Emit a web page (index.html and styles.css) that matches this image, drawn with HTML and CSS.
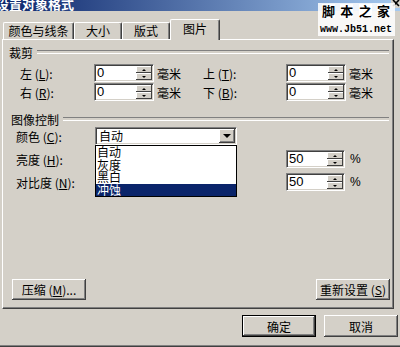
FILE: index.html
```html
<!DOCTYPE html>
<html lang="zh-CN">
<head>
    <meta charset="UTF-8">
    <meta name="viewport" content="width=device-width, initial-scale=1.0">
    <title>设置对象格式</title>
    <link rel="stylesheet" href="styles.css">
</head>
<body>
    <div class="titlebar">
        <span class="title">设置对象格式</span>
        <span class="close">
            <svg width="9" height="9" viewBox="0 0 9 9"><path d="M1 0 L7 6 M7 0 L1 6" stroke="#000" stroke-width="1.6"/></svg>
        </span>
    </div>

    <!-- site watermark over the title bar -->
    <div class="logo">
        <div class="logo-cn"><span>脚</span><span>本</span><span>之</span><span>家</span></div>
        <div class="logo-url">www.Jb51.net</div>
    </div>

    <div class="tabs">
        <div class="tab tab-wide">颜色与线条</div>
        <div class="tab">大小</div>
        <div class="tab">版式</div>
        <div class="tab active">图片</div>
    </div>

    <div class="panel">
        <div class="group-title first"><span>裁剪</span></div>
        <div class="crop-grid">
            <span class="label">左 (<u>L</u>):</span>
            <div class="spin"><span class="spin-value">0</span><div class="spin-btns"><span class="up"></span><span class="down"></span></div></div>
            <span class="unit">毫米</span>
            <span class="label">上 (<u>T</u>):</span>
            <div class="spin"><span class="spin-value">0</span><div class="spin-btns"><span class="up"></span><span class="down"></span></div></div>
            <span class="unit">毫米</span>

            <span class="label">右 (<u>R</u>):</span>
            <div class="spin"><span class="spin-value">0</span><div class="spin-btns"><span class="up"></span><span class="down"></span></div></div>
            <span class="unit">毫米</span>
            <span class="label">下 (<u>B</u>):</span>
            <div class="spin"><span class="spin-value">0</span><div class="spin-btns"><span class="up"></span><span class="down"></span></div></div>
            <span class="unit">毫米</span>
        </div>

        <div class="group-title second"><span>图像控制</span></div>
        <div class="ctl-row">
            <span class="ctl-label">颜色 (<u>C</u>):</span>
            <div class="combo">
                <span class="combo-value">自动</span>
                <span class="combo-btn"></span>
                <ul class="combo-list">
                    <li>自动</li>
                    <li>灰度</li>
                    <li>黑白</li>
                    <li class="selected">冲蚀</li>
                </ul>
            </div>
        </div>
        <div class="ctl-row gap">
            <span class="ctl-label long">亮度 (<u>H</u>):</span>
            <div class="spin small"><span class="spin-value">50</span><div class="spin-btns"><span class="up"></span><span class="down"></span></div></div>
            <span class="pct">%</span>
        </div>
        <div class="ctl-row gap">
            <span class="ctl-label long">对比度 (<u>N</u>):</span>
            <div class="spin small"><span class="spin-value">50</span><div class="spin-btns"><span class="up"></span><span class="down"></span></div></div>
            <span class="pct">%</span>
        </div>

        <div class="panel-buttons">
            <button class="btn">压缩 (<u>M</u>)...</button>
            <button class="btn">重新设置 (<u>S</u>)</button>
        </div>
    </div>

    <div class="dialog-buttons">
        <button class="btn default">确定</button>
        <button class="btn">取消</button>
    </div>
    <div class="bottom-edge"></div>
</body>
</html>
```

FILE: styles.css
```css
* {
    box-sizing: border-box;
}
body {
    margin: 0;
    width: 400px;
    height: 347px;
    overflow: hidden;
    position: relative;
    background-color: #d4d0c8;
    font-family: "Noto Sans CJK SC", "Liberation Sans", sans-serif;
    font-size: 12px;
    color: #000;
}
u {
    text-decoration: underline;
}

/* title bar */
.titlebar {
    height: 11px;
    display: flex;
    overflow: hidden;
    background: linear-gradient(to right, #0a246a, #a6caf0);
}
.title {
    color: #fff;
    font-weight: bold;
    font-size: 13px;
    line-height: 13px;
    margin: -3px 0 0 -4px;
}
.close {
    margin-left: auto;
    width: 9px;
    height: 8px;
    background-color: #d4d0c8;
}
.close svg {
    display: block;
    margin: 0 0 0 1px;
}

/* watermark */
.logo {
    position: absolute;
    top: 3px;
    left: 318px;
    width: 77px;
    height: 33px;
    background-color: rgba(255, 255, 255, 0.85);
    padding-top: 1px;
}
.logo-cn {
    display: flex;
    justify-content: space-between;
    padding: 0 5px 0 4px;
}
.logo-cn span {
    font-weight: bold;
    font-size: 13px;
    line-height: 14px;
    background-color: #fff;
}
.logo-url {
    margin-top: 7px;
    font-family: "Liberation Mono", monospace;
    font-weight: bold;
    font-size: 10px;
    line-height: 10px;
    padding-left: 2px;
}

/* tabs */
.tabs {
    display: flex;
    align-items: flex-end;
    height: 20px;
    margin: 8px 0 0 3px;
}
.tab {
    width: 48px;
    height: 17px;
    text-align: center;
    line-height: 15px;
    font-size: 12px;
    border-top: 1px solid #fff;
    border-left: 1px solid #fff;
    border-right: 1px solid #404040;
    border-radius: 2px 2px 0 0;
    box-shadow: inset -1px 0 #808080;
}
.tab-wide {
    width: 71px;
}
.tab.active {
    width: 50px;
    height: 21px;
    margin-bottom: -1px;
    line-height: 17px;
    position: relative;
    z-index: 1;
    background-color: #d4d0c8;
}

/* tab panel */
.panel {
    margin-left: 2px;
    width: 392px;
    height: 270px;
    display: flex;
    flex-direction: column;
    border-top: 1px solid #fff;
    border-left: 1px solid #fff;
    border-right: 1px solid #404040;
    border-bottom: 1px solid #404040;
    box-shadow: inset -1px -1px #808080;
}
.group-title {
    display: flex;
    align-items: center;
    gap: 4px;
    padding: 0 4px 0 6px;
}
.group-title::after {
    content: "";
    flex: 1;
    height: 2px;
    border-top: 1px solid #808080;
    border-bottom: 1px solid #fff;
}
.group-title.first {
    height: 24px;
}
.group-title.second {
    height: 14px;
    margin-top: 11px;
    padding-left: 8px;
}

.crop-grid {
    display: grid;
    grid-template-columns: 74px 60px 49px 83px 60px auto;
    grid-auto-rows: 18px;
    row-gap: 1px;
    align-items: center;
    margin-left: 17px;
}
.unit {
    padding-left: 3px;
}

/* spin box */
.spin {
    height: 18px;
    display: flex;
    background-color: #fff;
    border: 1px solid;
    border-color: #808080 #fff #fff #808080;
    padding: 1px;
    box-shadow: inset 1px 1px #404040, inset -1px -1px #d4d0c8;
}
.spin.small {
    width: 59px;
}
.spin-value {
    flex: 1;
    padding-left: 1px;
    font-family: "Liberation Sans", sans-serif;
    font-size: 13px;
    line-height: 14px;
}
.spin-btns {
    width: 16px;
    display: flex;
    flex-direction: column;
}
.spin-btns span {
    flex: 1;
    display: flex;
    align-items: center;
    justify-content: center;
    background-color: #d4d0c8;
    box-shadow: inset -1px -1px #404040, inset 1px 1px #fff;
}
.spin-btns .up::before {
    content: "";
    border-left: 2px solid transparent;
    border-right: 2px solid transparent;
    border-bottom: 2px solid #000;
}
.spin-btns .down::before {
    content: "";
    border-left: 2px solid transparent;
    border-right: 2px solid transparent;
    border-top: 2px solid #000;
}

/* image control rows */
.ctl-row {
    display: flex;
    align-items: center;
    height: 18px;
    margin: 1px 0 0 13px;
}
.ctl-row.gap {
    margin-top: 5px;
}
.ctl-label {
    width: 79px;
}
.ctl-label.long {
    width: 270px;
}
.pct {
    padding-left: 5px;
    font-family: "Liberation Sans", sans-serif;
}

.combo {
    position: relative;
    width: 142px;
    height: 18px;
    display: flex;
    background-color: #fff;
    border: 1px solid;
    border-color: #808080 #fff #fff #808080;
    padding: 1px;
    box-shadow: inset 1px 1px #404040, inset -1px -1px #d4d0c8;
}
.combo-value {
    flex: 1;
    padding-left: 2px;
    font-size: 12px;
    line-height: 14px;
}
.combo-btn {
    width: 16px;
    display: flex;
    align-items: center;
    justify-content: center;
    background-color: #d4d0c8;
    box-shadow: inset -1px -1px #404040, inset 1px 1px #fff, inset -2px -2px #808080;
}
.combo-btn::before {
    content: "";
    border-left: 4px solid transparent;
    border-right: 4px solid transparent;
    border-top: 4px solid #000;
}
.combo-list {
    position: absolute;
    top: 17px;
    left: -1px;
    width: 142px;
    margin: 0;
    padding: 0;
    list-style: none;
    background-color: #fff;
    border: 1px solid #000;
    z-index: 2;
}
.combo-list li {
    height: 12.5px;
    line-height: 12.5px;
    font-size: 12px;
    padding-left: 1px;
}
.combo-list li.selected {
    background-color: #0a246a;
    color: #fff;
}

/* buttons */
.btn {
    width: 74px;
    height: 21px;
    padding: 0;
    border: none;
    background-color: #d4d0c8;
    font-family: inherit;
    font-size: 12px;
    white-space: nowrap;
    color: #000;
    box-shadow: inset -1px -1px #404040, inset 1px 1px #fff, inset -2px -2px #808080;
}
.btn.default {
    height: 22px;
    border: 1px solid #000;
}
.panel-buttons {
    margin-top: auto;
    display: flex;
    justify-content: space-between;
    padding: 0 3px 8px 9px;
}
.dialog-buttons {
    display: flex;
    justify-content: flex-end;
    gap: 8px;
    margin-top: 6px;
    padding-right: 2px;
}
.dialog-buttons .btn {
    height: 22px;
}
.bottom-edge {
    margin-top: 8px;
    height: 2px;
    border-top: 1px solid #808080;
    background-color: #404040;
}
```
